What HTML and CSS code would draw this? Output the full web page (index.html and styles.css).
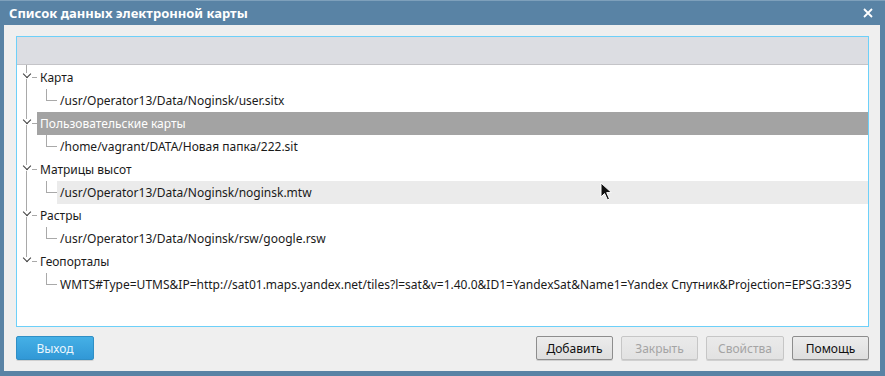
FILE: index.html
```html
<!DOCTYPE html>
<html>
<head>
<meta charset="utf-8">
<link rel="stylesheet" href="styles.css">
</head>
<body>
<div class="window">
  <div class="titlebar">
    <span class="title">Список данных электронной карты</span>
    <svg class="close" width="10" height="10" viewBox="0 0 10 10"><path d="M1 1L9 9M9 1L1 9" stroke="#fff" stroke-width="1.8"/></svg>
  </div>
  <div class="client">
    <div class="tree">
      <div class="header"></div>
      <div class="rows">
        <div class="row top first"><span class="chev"></span><span class="label">Карта</span></div>
        <div class="row child"><span class="label">/usr/Operator13/Data/Noginsk/user.sitx</span></div>
        <div class="row top selected"><span class="chev"></span><span class="label">Пользовательские карты</span></div>
        <div class="row child"><span class="label">/home/vagrant/DATA/Новая папка/222.sit</span></div>
        <div class="row top"><span class="chev"></span><span class="label">Матрицы высот</span></div>
        <div class="row child hover"><span class="label">/usr/Operator13/Data/Noginsk/noginsk.mtw</span></div>
        <div class="row top"><span class="chev"></span><span class="label">Растры</span></div>
        <div class="row child"><span class="label">/usr/Operator13/Data/Noginsk/rsw/google.rsw</span></div>
        <div class="row top last"><span class="chev"></span><span class="label">Геопорталы</span></div>
        <div class="row child lastchild"><span class="label">WMTS#Type=UTMS&amp;IP=http://sat01.maps.yandex.net/tiles?l=sat&amp;v=1.40.0&amp;ID1=YandexSat&amp;Name1=Yandex Спутник&amp;Projection=EPSG:3395</span></div>
      </div>
      <svg class="cursor" width="14" height="20" viewBox="0 0 14 20"><path d="M1 1L1 15L4.5 11.5L7.5 18L9.5 17L6.7 10.6L11.5 10.6Z" fill="#111" stroke="#fff" stroke-width="1"/></svg>
    </div>
    <div class="buttons">
      <button class="btn primary">Выход</button>
      <span class="spacer"></span>
      <button class="btn">Добавить</button>
      <button class="btn disabled">Закрыть</button>
      <button class="btn disabled wide">Свойства</button>
      <button class="btn">Помощь</button>
    </div>
  </div>
</div>
</body>
</html>
```

FILE: styles.css
```css
html, body {
  margin: 0;
  padding: 0;
}
body {
  width: 885px;
  height: 376px;
  overflow: hidden;
  font-family: "Noto Sans", "Open Sans", sans-serif;
  font-size: 12px;
}
.window {
  width: 885px;
  height: 376px;
  box-sizing: border-box;
  background: #5983a5;
  border-top: 1px solid #7ea0bb;
  display: flex;
  flex-direction: column;
}
.titlebar {
  height: 24px;
  display: flex;
  align-items: center;
  justify-content: space-between;
  padding: 0 12px 0 9px;
  color: #fff;
}
.title {
  font-weight: bold;
  font-size: 13px;
}
.close {
  display: block;
}
.client {
  flex: 1;
  margin: 0 5px 5px 4px;
  background: #efefef;
  padding: 11px 11px 11px 12px;
  display: flex;
  flex-direction: column;
  gap: 9px;
}
.tree {
  position: relative;
  flex: 1;
  background: #fff;
  border: 1px solid #6dd0f9;
  display: flex;
  flex-direction: column;
}
.header {
  height: 27px;
  background: #dcdde2;
  border-bottom: 1px solid #c4c4c8;
}
.rows {
  padding-top: 1px;
  position: relative;
}
.row {
  position: relative;
  height: 23px;
  display: flex;
  align-items: center;
  color: #1a1a1a;
  white-space: nowrap;
}
.row .label {
  height: 23px;
  line-height: 23px;
}
.row.top .label {
  padding-left: 23px;
  padding-right: 0;
  flex: 1;
}
.row.top.selected .label {
  background: #a3a3a3;
  color: #fff;
  margin-left: 20px;
  padding-left: 3px;
}
.row.child .label {
  padding-left: 43px;
  flex: 1;
}
.row.child.hover .label {
  background: #ebebeb;
  margin-left: 40px;
  padding-left: 3px;
}
/* vertical guide for top-level items */
.row.top::before,
.row.child::before {
  content: "";
  position: absolute;
  left: 9px;
  top: 0;
  bottom: 0;
  border-left: 1px solid #a9a9a9;
}
.row.top.first::before {
  top: -1px;
}
.row.top.last::before {
  bottom: 11px;
}
.row.lastchild::before {
  display: none;
}
/* horizontal dash for top-level */
.row.top::after {
  content: "";
  position: absolute;
  left: 15px;
  width: 5px;
  top: 11px;
  border-top: 1px solid #a9a9a9;
}
.chev {
  position: absolute;
  left: 5px;
  top: 7px;
  width: 9px;
  height: 6px;
  background: #fff;
}
.chev::before {
  content: "";
  position: absolute;
  left: 1.5px;
  top: -2px;
  width: 5px;
  height: 5px;
  border-right: 1px solid #3c3c3c;
  border-bottom: 1px solid #3c3c3c;
  transform: rotate(45deg);
}
/* child branch */
.row.child .label::before {
  content: "";
  position: absolute;
  left: 29px;
  top: 0;
  height: 11px;
  width: 10px;
  border-left: 1px solid #a9a9a9;
  border-bottom: 1px solid #a9a9a9;
}
.cursor {
  position: absolute;
  left: 583px;
  top: 145px;
}
.buttons {
  display: flex;
  align-items: center;
  gap: 8px;
  height: 24px;
}
.spacer {
  flex: 1;
}
.btn {
  font-family: "Noto Sans", "Open Sans", sans-serif;
  font-size: 12px;
  height: 24px;
  width: 77px;
  padding: 0;
  border: 1px solid #8d8d8d;
  border-radius: 2px;
  background: linear-gradient(#ececec, #dedede);
  color: #111;
  box-shadow: 0 1px 0 #d0d0d0;
}
.btn.wide {
  width: 78px;
}
.btn.disabled {
  border-color: #c6c6c6;
  color: #a4a4a4;
  background: linear-gradient(#eaeaea, #e2e2e2);
}
.btn.primary {
  width: 78px;
  border-color: #2f8fc6;
  background: linear-gradient(#45b0e6, #3198d6);
  color: #eaf6fd;
}
```
